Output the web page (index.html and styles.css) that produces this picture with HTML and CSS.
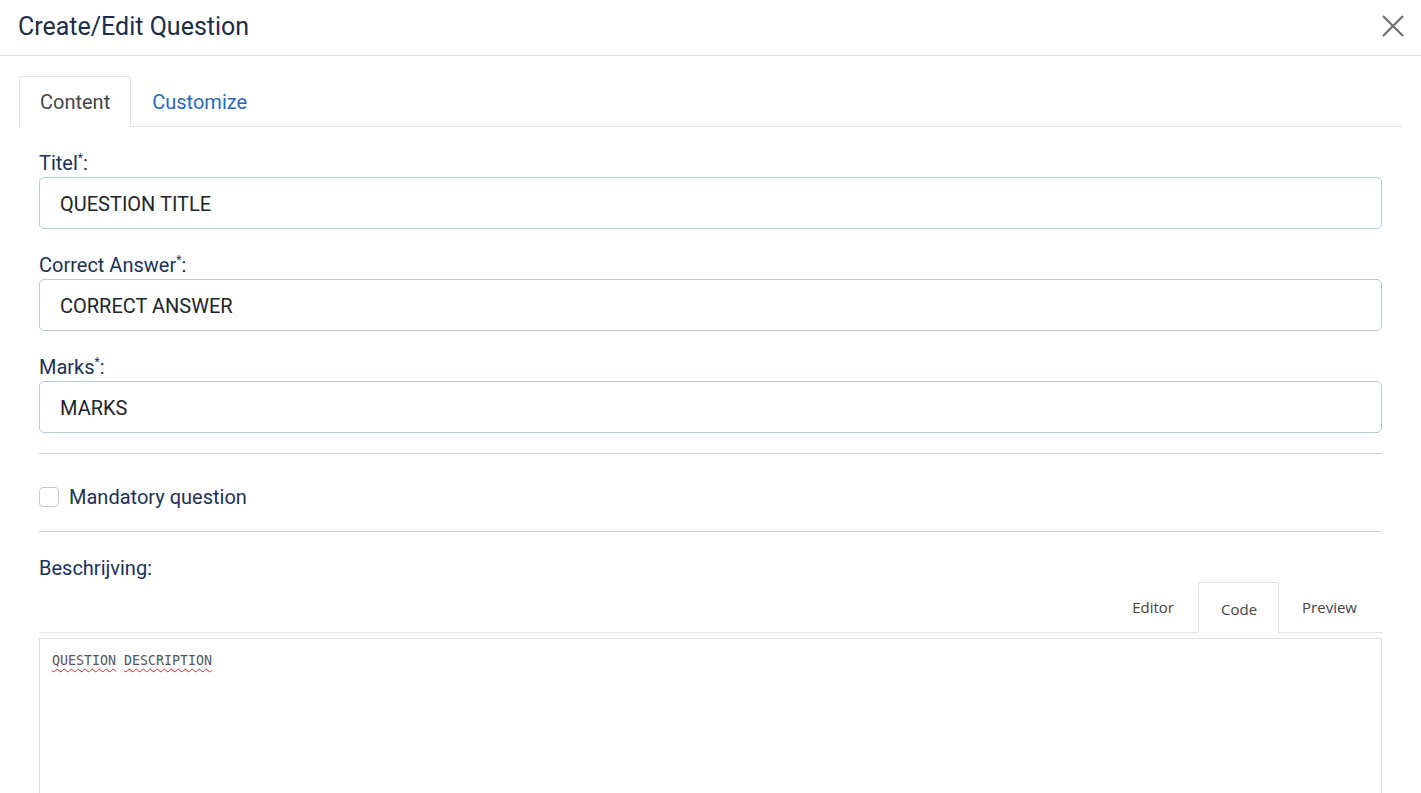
FILE: index.html
```html
<!DOCTYPE html>
<html>
<head>
<meta charset="utf-8">
<link rel="stylesheet" href="styles.css">
</head>
<body>
<div class="modal">
  <div class="modal-header">
    <h1 class="modal-title">Create/Edit Question</h1>
    <button class="close-btn" aria-label="Close">
      <svg width="24" height="24" viewBox="0 0 24 24"><path d="M2 2L22 22M22 2L2 22" stroke="#6f6f6f" stroke-width="2.2" fill="none"/></svg>
    </button>
  </div>
  <div class="tabs-wrap">
    <div class="tabs">
      <div class="tab active">Content</div>
      <div class="tab link">Customize</div>
    </div>
  </div>
  <div class="form">
    <div class="group">
      <label class="label">Titel<sup>*</sup>:</label>
      <div class="input">QUESTION TITLE</div>
    </div>
    <div class="group">
      <label class="label">Correct Answer<sup>*</sup>:</label>
      <div class="input">CORRECT ANSWER</div>
    </div>
    <div class="group">
      <label class="label">Marks<sup>*</sup>:</label>
      <div class="input">MARKS</div>
    </div>
    <hr class="sep">
    <div class="check-row">
      <span class="checkbox"></span>
      <span class="check-label">Mandatory question</span>
    </div>
    <hr class="sep second">
    <div class="label desc-label">Beschrijving:</div>
    <div class="editor-tabs">
      <div class="etab">Editor</div>
      <div class="etab active">Code</div>
      <div class="etab last">Preview</div>
    </div>
    <div class="code-box"><span class="spell">QUESTION</span> <span class="spell">DESCRIPTION</span></div>
  </div>
</div>
</body>
</html>
```
FILE: styles.css
```css
html, body {
  margin: 0;
  padding: 0;
  background: #fff;
  overflow: hidden;
}
body {
  font-family: Roboto, "Liberation Sans", sans-serif;
  color: #1c2e4a;
}
.modal {
  width: 1421px;
}
.modal-header {
  height: 55px;
  border-bottom: 1px solid #e2e2e2;
  display: flex;
  align-items: center;
  justify-content: space-between;
  padding: 0 16px 0 18px;
}
.modal-title {
  margin: 0;
  font-size: 25px;
  font-weight: 400;
  color: #1e2d44;
  position: relative;
  top: -1px;
}
.close-btn {
  border: 0;
  background: none;
  padding: 0;
  width: 24px;
  height: 24px;
  display: flex;
  position: relative;
  top: -2px;
}
.tabs-wrap {
  padding: 20px 19px 0 19px;
}
.tabs {
  display: flex;
  border-bottom: 1px solid #e2e2e2;
  height: 50px;
}
.tab {
  padding: 0 20px;
  height: 50px;
  display: flex;
  align-items: center;
  font-size: 20px;
  border: 1px solid transparent;
  border-bottom: 0;
  border-radius: 4px 4px 0 0;
  box-sizing: border-box;
}
.tab.active {
  border-color: #e2e2e2;
  background: #fff;
  height: 51px;
  color: #454545;
  padding: 0 20px;
}
.tab.link {
  color: #2768bd;
}
.form {
  padding: 24px 39px 0 39px;
}
.group {
  margin-bottom: 24px;
}
.label {
  display: block;
  font-size: 20px;
  line-height: 24px;
  color: #1b3255;
  margin-bottom: 2px;
}
.label sup {
  font-size: 12px;
  line-height: 0;
  vertical-align: 0;
  position: relative;
  top: -8px;
}
.input {
  height: 52px;
  box-sizing: border-box;
  border: 1px solid #b9c8dd;
  border-radius: 5px;
  padding: 1px 20px 0;
  display: flex;
  align-items: center;
  font-size: 20px;
  color: #212529;
}
.sep {
  border: 0;
  border-top: 1px solid #d3d3d3;
  margin: -4px 0 0 0;
}
.check-row {
  display: flex;
  align-items: center;
  gap: 10px;
  height: 69px;
  padding-top: 8px;
}
.checkbox {
  width: 20px;
  height: 20px;
  box-sizing: border-box;
  border: 1px solid #c9c9c9;
  border-radius: 4px;
}
.check-label {
  font-size: 20px;
  color: #1b3255;
}
.sep.second {
  margin: 0;
}
.desc-label {
  margin-top: 24px;
}
.editor-tabs {
  display: flex;
  justify-content: flex-end;
  margin-top: 2px;
  border-bottom: 1px solid #e2e2e2;
  height: 50px;
  font-family: "Open Sans", sans-serif;
  font-size: 15px;
  color: #444;
}
.etab {
  display: flex;
  align-items: center;
  padding: 0 23px 2px 22px;
  height: 50px;
  box-sizing: border-box;
  border: 1px solid transparent;
  border-bottom: 0;
  border-radius: 3px 3px 0 0;
}
.etab.last {
  padding-right: 24px;
}
.etab.active {
  border-color: #e2e2e2;
  background: #fff;
  height: 51px;
  padding: 2px 21px 0 22px;
}
.code-box {
  margin-top: 5px;
  height: 220px;
  border: 1px solid #dedede;
  padding: 14px 12px 12px;
  font-family: "DejaVu Sans Mono", monospace;
  font-size: 13.3px;
  color: #555;
}
.spell {
  text-decoration: underline wavy #e02020;
  text-decoration-thickness: 1px;
  text-underline-offset: 3px;
}
```
